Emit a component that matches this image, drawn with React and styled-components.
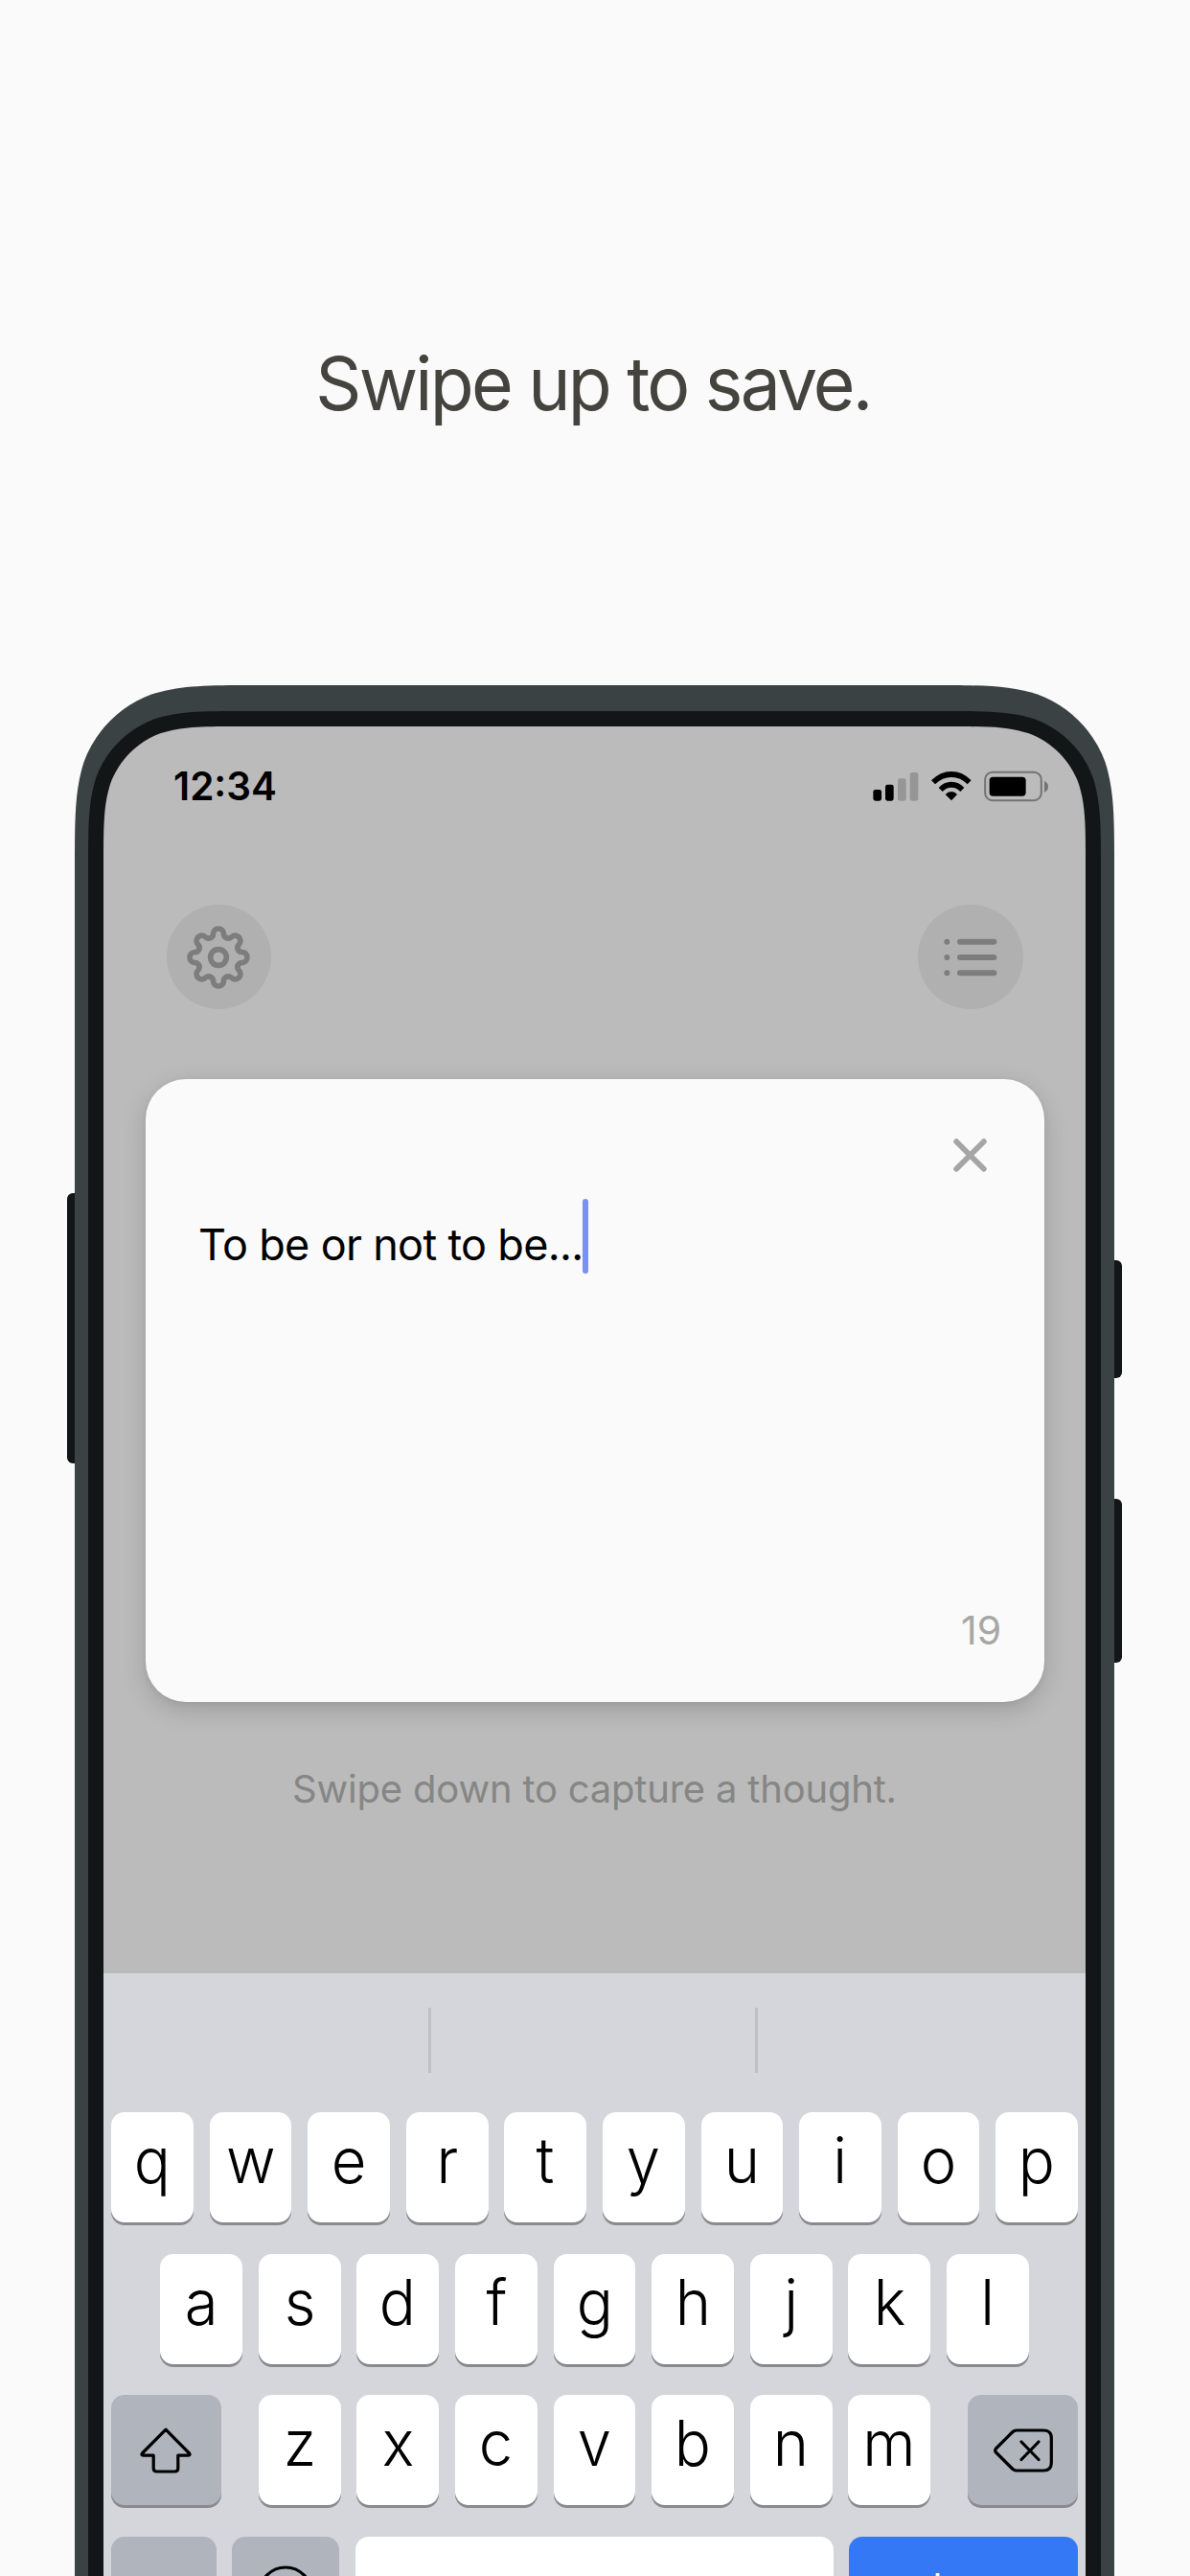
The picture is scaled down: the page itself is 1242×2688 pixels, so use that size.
import React from "react";
import styled, { createGlobalStyle } from "styled-components";

const GlobalStyle = createGlobalStyle`
  *, *::before, *::after { box-sizing: border-box; }
  html, body { margin: 0; background: #fafafa; }
  body { font-family: Inter, "Liberation Sans", sans-serif; }
`;

/* Panel with continuous-curvature top corners and an open bottom edge. */
const panelPath = (w, h, r) => {
  const p = (n) => (n * r).toFixed(2);
  const q = (n) => (w - n * r).toFixed(2);
  return (
    `M0 ${h}V${p(1.52866)}` +
    `C0 ${p(1.08849)} 0 ${p(0.86841)} ${p(0.07491)} ${p(0.63149)}` +
    `C${p(0.16906)} ${p(0.37282)} ${p(0.37282)} ${p(0.16906)} ${p(0.63149)} ${p(0.07491)}` +
    `C${p(0.86841)} 0 ${p(1.08849)} 0 ${p(1.52866)} 0` +
    `H${q(1.52866)}` +
    `C${q(1.08849)} 0 ${q(0.86841)} 0 ${q(0.63149)} ${p(0.07491)}` +
    `C${q(0.37282)} ${p(0.16906)} ${q(0.16906)} ${p(0.37282)} ${q(0.07491)} ${p(0.63149)}` +
    `C${w} ${p(0.86841)} ${w} ${p(1.08849)} ${w} ${p(1.52866)}V${h}Z`
  );
};

const Page = styled.main`
  width: 1242px;
  height: 2688px;
  overflow: hidden;
  background: #fafafa;
  display: flex;
  flex-direction: column;
  align-items: center;
`;

const Headline = styled.h1`
  flex: none;
  margin: 0;
  height: 715px;
  padding-top: 353px;
  padding-right: 4px;
  font-size: 77.5px;
  line-height: 94px;
  font-weight: 400;
  letter-spacing: -2.9px;
  color: #44433e;
  white-space: nowrap;
  transform: scaleX(0.969);
`;

const Phone = styled.section`
  position: relative;
  width: 1085px;
  height: 1973px;
  margin-right: 1px;
  flex: none;
`;

const SideButton = styled.div`
  position: absolute;
  top: ${(p) => p.$top}px;
  ${(p) => p.$side}: -8px;
  width: 8px;
  height: ${(p) => p.$height}px;
  background: #121616;
  border-radius: ${(p) => (p.$side === "left" ? "6px 0 0 6px" : "0 6px 6px 0")};
`;

const Shell = styled.div`
  height: 1973px;
  padding: 27px 14px 0;
  background: #3b4244;
  clip-path: path("${panelPath(1085, 1973, 127)}");
`;

const Bezel = styled.div`
  height: 1946px;
  padding: 16px 16px 0;
  background: #121616;
  clip-path: path("${panelPath(1057, 1946, 110)}");
`;

const Screen = styled.div`
  height: 1930px;
  background: #bbbbbb;
  clip-path: path("${panelPath(1025, 1930, 95)}");
  display: flex;
  flex-direction: column;
  > * { flex: none; }
`;

const StatusBar = styled.div`
  display: flex;
  justify-content: space-between;
  align-items: flex-start;
  height: 186px;
  padding: 46px 37.7px 0 73px;
`;

const Clock = styled.time`
  margin-top: -8px;
  font-size: 40.5px;
  line-height: 50px;
  font-weight: 600;
  color: #000;
`;

const Toolbar = styled.nav`
  display: flex;
  justify-content: space-between;
  height: 182px;
  padding: 0 65.5px;
`;

const RoundButton = styled.button`
  width: 109.4px;
  height: 109.4px;
  padding: 0;
  border: 0;
  border-radius: 50%;
  background: #b0b0b0;
  display: flex;
  align-items: center;
  justify-content: center;
`;

const Card = styled.article`
  display: flex;
  flex-direction: column;
  width: 938px;
  height: 650px;
  margin: 0 auto 0 43.6px;
  border-radius: 42px;
  background: #fafafa;
  box-shadow: 0 8px 26px rgba(0, 0, 0, 0.16), 0 2px 6px rgba(0, 0, 0, 0.05);
`;

const CardTop = styled.div`
  display: flex;
  justify-content: flex-end;
  height: 125px;
  padding: 62px 60px 0 0;
`;

const NoteLine = styled.div`
  display: flex;
  flex: 1;
  align-items: flex-start;
  padding-left: 55.5px;
`;

const NoteText = styled.span`
  margin-top: 20px;
  font-size: 45px;
  line-height: 56px;
  letter-spacing: -0.68px;
  color: #000;
  white-space: nowrap;
`;

const Caret = styled.span`
  width: 6px;
  height: 78px;
  margin-left: -1px;
  border-radius: 3px;
  background: #7b91ef;
`;

const Counter = styled.div`
  align-self: flex-end;
  padding: 0 44.5px 50px 0;
  font-size: 41px;
  line-height: 50px;
  color: #a7a7a3;
`;

const Hint = styled.p`
  margin: 66px 0 0;
  height: 217px;
  text-align: center;
  font-size: 40px;
  line-height: 50px;
  letter-spacing: -0.2px;
  color: #868685;
  white-space: nowrap;
`;

const Keyboard = styled.div`
  height: 700px;
  background: #d5d6db;
`;

const Suggestions = styled.div`
  display: grid;
  grid-template-columns: 1fr 1fr 1fr;
  height: 145px;
  padding-top: 36px;
`;

const Suggestion = styled.div`
  height: 68px;
  border-right: ${(p) => (p.$last ? "0" : "3px solid #bfc0c5")};
`;

const KeyRow = styled.div`
  display: flex;
  justify-content: ${(p) => (p.$spread ? "space-between" : "center")};
  gap: ${(p) => (p.$spread ? "0" : "16.8px")};
  height: 147.7px;
  padding: 0 8px;
`;

const KeyGroup = styled.div`
  display: flex;
  gap: 16.8px;
`;

const keyTones = {
  light: ["#ffffff", "#000000"],
  grey: ["#b0b4bd", "#000000"],
  blue: ["#3478f6", "#ffffff"],
};

const Key = styled.button`
  width: ${(p) => p.$width || 85.8}px;
  height: 115px;
  flex: none;
  padding: 0;
  border: 0;
  border-radius: 14px;
  background: ${(p) => keyTones[p.$tone || "light"][0]};
  color: ${(p) => keyTones[p.$tone || "light"][1]};
  box-shadow: 0 3px 0 #898a8d;
  display: flex;
  justify-content: center;
  align-items: ${(p) => (p.$top ? "flex-start" : "center")};
  padding-top: ${(p) => p.$top || 0}px;
`;

const Letter = styled.span`
  font-family: Inter, "Liberation Sans", sans-serif;
  font-size: 66px;
  line-height: 80px;
  height: 80px;
  margin-top: -15px;
  font-weight: 350;
  transform: scaleX(0.96);
`;

const ActionLabel = styled.span`
  font-family: Inter, "Liberation Sans", sans-serif;
  font-size: 40px;
  line-height: 50px;
  font-weight: 400;
  letter-spacing: -0.5px;
`;

const tooth =
  "C-17.9 -64.1 -16.5 -68 -16.5 -73C-16.5 -84 -9 -90 0 -90C9 -90 16.5 -84 16.5 -73C16.5 -68 17.9 -64.1 25.3 -61";

const GearIcon = () => (
  <svg width="66" height="66" viewBox="-99 -99 198 198" fill="none" stroke="#7d7d7d" strokeWidth="17" strokeLinecap="round">
    {[0, 45, 90, 135, 180, 225, 270, 315].map((a) => (
      <path key={a} d={`M-25.3 -61${tooth}`} transform={`rotate(${a})`} />
    ))}
    <circle r="25" />
  </svg>
);

const ListIcon = () => (
  <svg width="56" height="40" viewBox="0 0 168 120" fill="none" stroke="#7d7d7d" strokeWidth="18" strokeLinecap="round">
    {[11, 60, 109].map((y) => (
      <path key={y} d={`M10 ${y}h.1M51 ${y}h106`} />
    ))}
  </svg>
);

const StatusIcons = () => (
  <svg width="185.33" height="32.67" viewBox="150 312 556 98">
    <rect x="154" y="372" width="26" height="35" rx="7" />
    <rect x="192" y="356" width="26" height="51" rx="7" />
    <rect x="231" y="337" width="26" height="70" rx="7" fill="#969696" />
    <rect x="269" y="318" width="26" height="89" rx="7" fill="#969696" />
    <path d="M336 343Q364 315 399 315Q434 315 461 343L449 355Q427 333 399 333Q371 333 348 355Z" />
    <path d="M359 366Q376 347 399 347Q422 347 439 366L427 378Q415 365 399 365Q383 365 371 378Z" />
    <path d="M380 387Q388 378 399 378Q410 378 417 387L399 406Z" />
    <rect x="504.5" y="317.5" width="176" height="88" rx="23" fill="none" stroke="#737373" strokeWidth="6" />
    <rect x="518" y="332" width="114" height="60" rx="11" />
    <path d="M690 345Q702 350 702 362Q702 375 690 380Z" fill="#737373" />
  </svg>
);

const CloseIcon = () => (
  <svg width="35" height="35" viewBox="0 0 35 35" fill="none" stroke="#a5a5a5" strokeWidth="5.8" strokeLinecap="round">
    <path d="M3.2 3.2L31.8 31.8M31.8 3.2L3.2 31.8" />
  </svg>
);

const ShiftIcon = () => (
  <svg width="54" height="48" viewBox="0 0 54 48" fill="none" stroke="#000" strokeWidth="3.2" strokeLinejoin="round">
    <path d="M27 2.2L51.6 27Q53 29.2 50 29.2H39.8V42.5Q39.8 46 36.3 46H17.7Q14.2 46 14.2 42.5V29.2H4Q1 29.2 2.4 27Z" />
  </svg>
);

const DeleteIcon = () => (
  <svg width="62" height="46" viewBox="0 0 62 46" fill="none" stroke="#000" strokeWidth="3.2" strokeLinecap="round" strokeLinejoin="round">
    <path d="M24 2H52Q60.3 2 60.3 10V36Q60.3 44 52 44H24Q21.5 44 19.5 42L2.5 25Q.8 23 2.5 21L19.5 4Q21.5 2 24 2Z" />
    <path d="M29 14L47 32.5M47 14L29 32.5" />
  </svg>
);

const SmileyIcon = () => (
  <svg width="58" height="58" viewBox="0 0 58 58" fill="none" stroke="#000" strokeWidth="3.2" strokeLinecap="round">
    <circle cx="29" cy="29" r="27" />
    <path d="M17 35Q29 50 41 35" />
    <path d="M21 20v5M37 20v5" />
  </svg>
);

const Letters = ({ chars }) =>
  chars.split("").map((c) => (
    <Key key={c}>
      <Letter>{c}</Letter>
    </Key>
  ));

export default function App() {
  return (
    <Page>
      <GlobalStyle />
      <Headline>Swipe up to save.</Headline>
      <Phone>
        <SideButton $side="left" $top={530} $height={282} />
        <SideButton $side="right" $top={600} $height={123} />
        <SideButton $side="right" $top={849} $height={171} />
        <Shell>
          <Bezel>
            <Screen>
              <StatusBar>
                <Clock>12:34</Clock>
                <StatusIcons />
              </StatusBar>
              <Toolbar>
                <RoundButton aria-label="Settings"><GearIcon /></RoundButton>
                <RoundButton aria-label="List"><ListIcon /></RoundButton>
              </Toolbar>
              <Card>
                <CardTop><CloseIcon /></CardTop>
                <NoteLine>
                  <NoteText>To be or not to be...</NoteText>
                  <Caret />
                </NoteLine>
                <Counter>19</Counter>
              </Card>
              <Hint>Swipe down to capture a thought.</Hint>
              <Keyboard>
                <Suggestions>
                  <Suggestion />
                  <Suggestion />
                  <Suggestion $last />
                </Suggestions>
                <KeyRow><Letters chars="qwertyuiop" /></KeyRow>
                <KeyRow><Letters chars="asdfghjkl" /></KeyRow>
                <KeyRow $spread>
                  <Key $tone="grey" $width={114.5} aria-label="Shift"><ShiftIcon /></Key>
                  <KeyGroup><Letters chars="zxcvbnm" /></KeyGroup>
                  <Key $tone="grey" $width={114.5} aria-label="Delete"><DeleteIcon /></Key>
                </KeyRow>
                <KeyRow $spread>
                  <Key $tone="grey" $width={109.5} />
                  <Key $tone="grey" $width={112} $top={30} aria-label="Emoji"><SmileyIcon /></Key>
                  <Key $width={499} aria-label="Space" />
                  <Key $tone="blue" $width={239} $top={28}><ActionLabel>done</ActionLabel></Key>
                </KeyRow>
              </Keyboard>
            </Screen>
          </Bezel>
        </Shell>
      </Phone>
    </Page>
  );
}
